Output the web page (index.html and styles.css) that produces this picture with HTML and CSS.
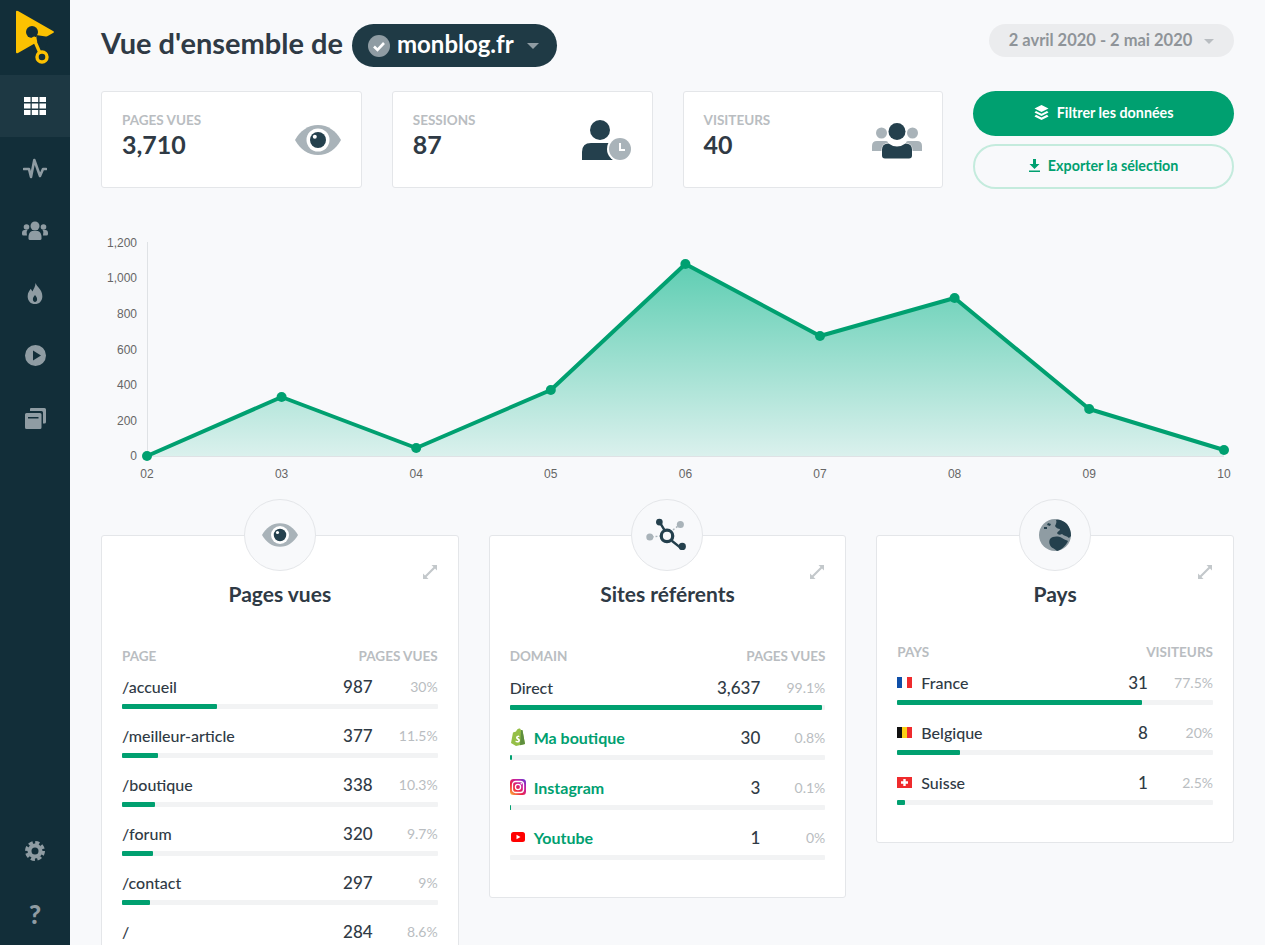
FILE: index.html
```html
<!DOCTYPE html>
<html lang="fr">
<head>
    <meta charset="UTF-8">
    <meta name="viewport" content="width=device-width, initial-scale=1.0">
    <title>Vue d'ensemble</title>
    <link rel="stylesheet" href="styles.css">
</head>
<body>
    <svg class="icon-defs" width="0" height="0">
        <symbol id="i-eye" viewBox="0 0 46 30">
            <path d="M0 15C5 6 13 0 23 0s18 6 23 15c-5 9-13 15-23 15S5 24 0 15z" fill="#a9b3b9"/>
            <circle cx="23" cy="15" r="11.5" fill="#fff"/>
            <circle cx="23" cy="15" r="8" fill="#24404d"/>
            <circle cx="19.8" cy="11.8" r="2" fill="#fff"/>
        </symbol>
        <symbol id="i-expand" viewBox="0 0 16 16">
            <path d="M9.5 1H15v5.5l-2-2L4.5 13l2 2H1V9.5l2 2L11.5 3z" fill="#c3c8cb"/>
        </symbol>
    </svg>

    <aside class="sidebar">
        <a class="logo" href="#">
            <svg width="70" height="75" viewBox="0 0 70 75">
                <path d="M18 11L53 31Q55 32 53 33L18 53Q16 54 16 52V12Q16 10 18 11z" fill="#fcc101"/>
                <path d="M36 35L49 37 44 52 39 52z" fill="#122e39"/>
                <circle cx="32" cy="32" r="6" fill="#122e39"/>
                <path d="M33 37L40 53" stroke="#fcc101" stroke-width="3.2"/>
                <circle cx="42" cy="57" r="5" fill="#122e39" stroke="#fcc101" stroke-width="3.4"/>
            </svg>
        </a>
        <nav class="side-nav">
            <a class="side-link active" href="#">
                <svg width="22" height="18" viewBox="0 0 22 18" fill="#fff">
                    <path d="M0 0h6.5v5H0zM7.8 0h6.4v5H7.8zM15.5 0H22v5h-6.5zM0 6.5h6.5v5H0zM7.8 6.5h6.4v5H7.8zM15.5 6.5H22v5h-6.5zM0 13h6.5v5H0zM7.8 13h6.4v5H7.8zM15.5 13H22v5h-6.5z"/>
                </svg>
            </a>
            <a class="side-link" href="#">
                <svg width="24" height="22" viewBox="0 0 24 22" fill="none" stroke="#8f9ca3" stroke-width="2.6" stroke-linejoin="round" stroke-linecap="round">
                    <path d="M1 11h5l2 8 3.3-17 5.7 16 3-7h3"/>
                </svg>
            </a>
            <a class="side-link" href="#">
                <svg width="26" height="19" viewBox="0 0 26 19" fill="#8f9ca3">
                    <circle cx="13" cy="5" r="4.5"/>
                    <path d="M6.5 16c0-4 2.5-6 4-6h5c1.5 0 4 2 4 6v1.5q0 1.5-1.5 1.5H8q-1.5 0-1.5-1.5z"/>
                    <circle cx="4.5" cy="6" r="2.8"/>
                    <circle cx="21.5" cy="6" r="2.8"/>
                    <path d="M0 12c0-2 1-3 2.5-3h3C4 10.5 5 13 5 14.5H1.5Q0 14.5 0 13zM26 12c0-2-1-3-2.5-3h-3c1.500 1.5 .5 4 .5 5.5h3.500q1.500 0 1.500-1.500z"/>
                </svg>
            </a>
            <a class="side-link" href="#">
                <svg width="16" height="21" viewBox="0 0 14 20" fill="#8f9ca3">
                    <path d="M7.5 0c1 3.5 6.5 6 6.500 12.500C14 17 11 20 7 20s-7-3-7-7.500C0 9 2 7 3 5.500l1.500 2.500C5.500 6 7.500 3.500 7.500 0zM7 11.500c-1 1.500-2 2.300-2 4S6 18 7 18s2-.8 2-2.500S8 13 7 11.500z" fill-rule="evenodd"/>
                </svg>
            </a>
            <a class="side-link" href="#">
                <svg width="21" height="21" viewBox="0 0 21 21" fill="#8f9ca3">
                    <path d="M10.5 0a10.5 10.5 0 1 0 0 21 10.5 10.5 0 0 0 0-21zM8 5.5l8 5-8 5z" fill-rule="evenodd"/>
                </svg>
            </a>
            <a class="side-link" href="#">
                <svg width="21" height="21" viewBox="0 0 21 21" fill="#8f9ca3">
                    <path d="M6 0h13.5q1.5 0 1.5 1.5V14q0 1.5-1.5 1.5H18V4.5Q18 3 16.5 3H5V1q0-1 1-1z"/>
                    <path d="M1.5 5h13.5q1.5 0 1.5 1.5v13q0 1.5-1.5 1.5H1.5Q0 21 0 19.5v-13Q0 5 1.5 5zM3 9v1.5h10.500V9z" fill-rule="evenodd"/>
                </svg>
            </a>
        </nav>
        <div class="side-bottom">
            <a class="side-link" href="#">
                <svg width="20" height="20" viewBox="0 0 20 20">
                    <circle cx="10" cy="10" r="5.5" fill="none" stroke="#8f9ca3" stroke-width="4"/>
                    <circle cx="10" cy="10" r="8.5" fill="none" stroke="#8f9ca3" stroke-width="3" stroke-dasharray="4.2 2.47"/>
                </svg>
            </a>
            <a class="side-link help" href="#">?</a>
        </div>
    </aside>

    <main class="main-content">
        <header class="header">
            <div class="title-row">
                <h1>Vue d'ensemble de</h1>
                <button class="site-pill">
                    <svg width="22" height="22" viewBox="0 0 22 22">
                        <circle cx="11" cy="11" r="11" fill="#8f9ca3"/>
                        <path d="M6 11.5l3.5 3.5L16 8" fill="none" stroke="#fff" stroke-width="2.6"/>
                    </svg>
                    <span class="site-name">monblog.fr</span>
                    <span class="caret"></span>
                </button>
            </div>
            <button class="date-pill">2 avril 2020 - 2 mai 2020 <span class="caret"></span></button>
        </header>

        <section class="stats">
            <div class="stat-card">
                <div>
                    <div class="stat-label">Pages vues</div>
                    <div class="stat-value">3,710</div>
                </div>
                <svg class="stat-eye"><use href="#i-eye"/></svg>
            </div>
            <div class="stat-card">
                <div>
                    <div class="stat-label">Sessions</div>
                    <div class="stat-value">87</div>
                </div>
                <svg class="stat-icon session-icon" width="50" height="40" viewBox="0 0 50 40">
                    <circle cx="18" cy="10" r="10" fill="#24404d"/>
                    <path d="M0 40v-8q0-9 9-9h18q9 0 9 9v8z" fill="#24404d"/>
                    <circle cx="38" cy="29" r="13" fill="#fff"/>
                    <circle cx="38" cy="29" r="11" fill="#a9b3b9"/>
                    <path d="M38 23v7h5" fill="none" stroke="#fff" stroke-width="2"/>
                </svg>
            </div>
            <div class="stat-card">
                <div>
                    <div class="stat-label">Visiteurs</div>
                    <div class="stat-value">40</div>
                </div>
                <svg class="stat-icon" width="50" height="36" viewBox="0 0 50 36">
                    <circle cx="9.5" cy="10" r="5.5" fill="#a9b3b9"/>
                    <circle cx="40.5" cy="10" r="5.5" fill="#a9b3b9"/>
                    <path d="M0 28v-5q0-5 5-5h9q2 0 2 2v8zM50 28v-5q0-5-5-5h-9q-2 0-2 2v8z" fill="#a9b3b9"/>
                    <circle cx="25" cy="8.5" r="8.5" fill="#24404d"/>
                    <path d="M9.5 33v-6q0-7 7-7 4 3 8.5 3t8.5-3q7 0 7 7v6q0 3-3 3h-25q-3 0-3-3z" fill="#fff"/>
                    <path d="M10 32.5v-6q0-6 6.500-6 4 3 8.500 3t8.500-3q6.500 0 6.500 6v6q0 3-3 3h-24q-3 0-3-3z" fill="#24404d"/>
                </svg>
            </div>
            <div class="actions">
                <button class="btn btn-primary">
                    <svg width="15" height="15" viewBox="0 0 15 15" fill="#fff">
                        <path d="M7.5 0l7 3.5-7 3.5-7-3.5z"/>
                        <path d="M2 6l5.5 2.8L13 6l1.5 1.5-7 3.5-7-3.5z"/>
                        <path d="M2 9.7l5.5 2.8L13 9.7l1.5 1.8-7 3.5-7-3.5z"/>
                    </svg>
                    Filtrer les données
                </button>
                <button class="btn btn-outline">
                    <svg width="11" height="13" viewBox="0 0 11 13" fill="#00a070">
                        <path d="M4 0h3v5h3.5L5.5 10 .5 5H4zM0 11.5h11V13H0z"/>
                    </svg>
                    Exporter la sélection
                </button>
            </div>
        </section>

        <section class="chart">
            <svg class="chart-svg" width="1133" height="250" viewBox="101 235 1133 250">
                <defs>
                    <linearGradient id="area-fill" x1="0" y1="264" x2="0" y2="456" gradientUnits="userSpaceOnUse">
                        <stop offset="0" stop-color="#00b386" stop-opacity=".62"/>
                        <stop offset="1" stop-color="#00b386" stop-opacity=".12"/>
                    </linearGradient>
                </defs>
                <path d="M147.5 242V456.5H1224" fill="none" stroke="#dfe2e5"/>
                <path d="M147 456L281.6 397 416.2 448 550.8 390 685.4 264 820 336 954.6 298 1089.2 409 1224 450V456z" fill="url(#area-fill)"/>
                <path d="M147 456L281.6 397 416.2 448 550.8 390 685.4 264 820 336 954.6 298 1089.2 409 1224 450" fill="none" stroke="#00a070" stroke-width="4" stroke-linejoin="round"/>
                <g fill="#00a070">
                    <circle cx="147" cy="456" r="5"/>
                    <circle cx="281.6" cy="397" r="5"/>
                    <circle cx="416.2" cy="448" r="5"/>
                    <circle cx="550.8" cy="390" r="5"/>
                    <circle cx="685.4" cy="264" r="5"/>
                    <circle cx="820" cy="336" r="5"/>
                    <circle cx="954.6" cy="298" r="5"/>
                    <circle cx="1089.2" cy="409" r="5"/>
                    <circle cx="1224" cy="450" r="5"/>
                </g>
                <g class="axis-y" text-anchor="end">
                    <text x="137" y="247">1,200</text>
                    <text x="137" y="282">1,000</text>
                    <text x="137" y="318">800</text>
                    <text x="137" y="354">600</text>
                    <text x="137" y="389">400</text>
                    <text x="137" y="425">200</text>
                    <text x="137" y="460">0</text>
                </g>
                <g class="axis-x" text-anchor="middle">
                    <text x="147" y="478">02</text>
                    <text x="281.6" y="478">03</text>
                    <text x="416.2" y="478">04</text>
                    <text x="550.8" y="478">05</text>
                    <text x="685.4" y="478">06</text>
                    <text x="820" y="478">07</text>
                    <text x="954.6" y="478">08</text>
                    <text x="1089.2" y="478">09</text>
                    <text x="1224" y="478">10</text>
                </g>
            </svg>
        </section>

        <section class="panels">
            <article class="panel">
                <div class="panel-badge"><svg class="badge-eye"><use href="#i-eye"/></svg></div>
                <svg class="expand"><use href="#i-expand"/></svg>
                <h2>Pages vues</h2>
                <div class="table-head"><span>Page</span><span>Pages vues</span></div>
                <div class="row">
                    <div class="row-line"><span class="row-name">/accueil</span><span class="row-num">987</span><span class="row-pct">30%</span></div>
                    <div class="bar"><div class="bar-fill" style="width: 30%"></div></div>
                </div>
                <div class="row">
                    <div class="row-line"><span class="row-name">/meilleur-article</span><span class="row-num">377</span><span class="row-pct">11.5%</span></div>
                    <div class="bar"><div class="bar-fill" style="width: 11.5%"></div></div>
                </div>
                <div class="row">
                    <div class="row-line"><span class="row-name">/boutique</span><span class="row-num">338</span><span class="row-pct">10.3%</span></div>
                    <div class="bar"><div class="bar-fill" style="width: 10.3%"></div></div>
                </div>
                <div class="row">
                    <div class="row-line"><span class="row-name">/forum</span><span class="row-num">320</span><span class="row-pct">9.7%</span></div>
                    <div class="bar"><div class="bar-fill" style="width: 9.7%"></div></div>
                </div>
                <div class="row">
                    <div class="row-line"><span class="row-name">/contact</span><span class="row-num">297</span><span class="row-pct">9%</span></div>
                    <div class="bar"><div class="bar-fill" style="width: 9%"></div></div>
                </div>
                <div class="row">
                    <div class="row-line"><span class="row-name">/</span><span class="row-num">284</span><span class="row-pct">8.6%</span></div>
                    <div class="bar"><div class="bar-fill" style="width: 8.6%"></div></div>
                </div>
            </article>

            <article class="panel panel-sites">
                <div class="panel-badge">
                    <svg width="42" height="34" viewBox="0 0 44 34">
                        <path d="M6 19l10-1M33 8l-9 7" stroke="#a9b3b9" stroke-width="1.5" stroke-dasharray="2 2"/>
                        <circle cx="4" cy="19" r="3.7" fill="#a9b3b9"/>
                        <circle cx="36" cy="6" r="3.7" fill="#a9b3b9"/>
                        <path d="M14 3l6 10M27 23l10 8" stroke="#24404d" stroke-width="2.5"/>
                        <circle cx="14" cy="3.5" r="3.5" fill="#24404d"/>
                        <circle cx="38" cy="29" r="3.8" fill="#24404d"/>
                        <circle cx="22" cy="18" r="6" fill="none" stroke="#24404d" stroke-width="3.4"/>
                    </svg>
                </div>
                <svg class="expand"><use href="#i-expand"/></svg>
                <h2>Sites référents</h2>
                <div class="table-head"><span>Domain</span><span>Pages vues</span></div>
                <div class="row">
                    <div class="row-line"><span class="row-name">Direct</span><span class="row-num">3,637</span><span class="row-pct">99.1%</span></div>
                    <div class="bar"><div class="bar-fill" style="width: 99.1%"></div></div>
                </div>
                <div class="row">
                    <div class="row-line">
                        <a class="row-name row-link" href="#">
                            <svg width="16" height="18" viewBox="0 0 16 18">
                                <path d="M1 15L3 4.5 6 3.5C7 1 8.5 0 10 .5l1 1.5 1.5.2L15 16 6 18z" fill="#95bf47"/>
                                <path d="M11 2l1.5.2L15 16l-5 1.2z" fill="#5e8e3e"/>
                                <path d="M8.8 7.5C7 7.5 6 8.5 6 9.7c0 1.8 2.3 1.7 2.3 2.8 0 .8-1.3.8-2.5.1l-.4 1.5c2.5 1 4.6.2 4.6-1.900 0-1.900-2.300-1.900-2.300-2.800 0-.6 1-.6 1.900-.3z" fill="#fff"/>
                            </svg>
                            Ma boutique
                        </a>
                        <span class="row-num">30</span><span class="row-pct">0.8%</span>
                    </div>
                    <div class="bar"><div class="bar-fill" style="width: 0.8%"></div></div>
                </div>
                <div class="row">
                    <div class="row-line">
                        <a class="row-name row-link" href="#">
                            <svg width="16" height="16" viewBox="0 0 16 16">
                                <defs>
                                    <linearGradient id="insta" x1="0" y1="1" x2="1" y2="0">
                                        <stop offset="0" stop-color="#fdc13a"/>
                                        <stop offset=".35" stop-color="#f0243e"/>
                                        <stop offset=".7" stop-color="#c31fa6"/>
                                        <stop offset="1" stop-color="#5a3bd6"/>
                                    </linearGradient>
                                </defs>
                                <rect width="16" height="16" rx="3.5" fill="url(#insta)"/>
                                <rect x="2.5" y="2.5" width="11" height="11" rx="3" fill="none" stroke="#fff" stroke-width="1.3"/>
                                <circle cx="8" cy="8" r="2.6" fill="none" stroke="#fff" stroke-width="1.3"/>
                                <circle cx="11.3" cy="4.7" r=".8" fill="#fff"/>
                            </svg>
                            Instagram
                        </a>
                        <span class="row-num">3</span><span class="row-pct">0.1%</span>
                    </div>
                    <div class="bar"><div class="bar-fill" style="width: 0.3%"></div></div>
                </div>
                <div class="row">
                    <div class="row-line">
                        <a class="row-name row-link" href="#">
                            <svg width="16" height="16" viewBox="0 0 16 16">
                                <rect x="1" y="3" width="14" height="10" rx="2.5" fill="#f00"/>
                                <path d="M6.5 5.8L10.5 8l-4 2.2z" fill="#fff"/>
                            </svg>
                            Youtube
                        </a>
                        <span class="row-num">1</span><span class="row-pct">0%</span>
                    </div>
                    <div class="bar"></div>
                </div>
            </article>

            <article class="panel panel-countries">
                <div class="panel-badge">
                    <svg width="32" height="32" viewBox="0 0 32 32">
                        <circle cx="16" cy="16" r="16" fill="#8f9ca3"/>
                        <path d="M17 1c3-1 8 1 11 4 3 4 4 8 4 12l-2 2c-2-2-5-2-7-4-2 1-4 1-5-1 1-2 3-2 3-4-2 0-4-1-5-3 1-2 2-4 1-6zM9 4l3 1-1 2-3-1zM5 8l3 0 0 2-3 0z" fill="#24404d"/>
                        <path d="M11 20c3-3 8-3 12-1 3 2 5 2 6 3-2 5-7 9-11 10-3-3-6-3-7-6-1-2-1-4 0-6z" fill="#24404d"/>
                    </svg>
                </div>
                <svg class="expand"><use href="#i-expand"/></svg>
                <h2>Pays</h2>
                <div class="table-head"><span>Pays</span><span>Visiteurs</span></div>
                <div class="row">
                    <div class="row-line">
                        <span class="row-name row-country">
                            <svg width="15" height="11" viewBox="0 0 15 11"><path fill="#0f4fa8" d="M0 0h5v11H0z"/><path fill="#fff" d="M5 0h5v11H5z"/><path fill="#ef2b2d" d="M10 0h5v11h-5z"/></svg>
                            France
                        </span>
                        <span class="row-num">31</span><span class="row-pct">77.5%</span>
                    </div>
                    <div class="bar"><div class="bar-fill" style="width: 77.5%"></div></div>
                </div>
                <div class="row">
                    <div class="row-line">
                        <span class="row-name row-country">
                            <svg width="15" height="11" viewBox="0 0 15 11"><path fill="#111" d="M0 0h5v11H0z"/><path fill="#fcd116" d="M5 0h5v11H5z"/><path fill="#ef2b2d" d="M10 0h5v11h-5z"/></svg>
                            Belgique
                        </span>
                        <span class="row-num">8</span><span class="row-pct">20%</span>
                    </div>
                    <div class="bar"><div class="bar-fill" style="width: 20%"></div></div>
                </div>
                <div class="row">
                    <div class="row-line">
                        <span class="row-name row-country">
                            <svg width="15" height="11" viewBox="0 0 15 11"><path fill="#ef2b2d" d="M0 0h15v11H0z"/><path fill="#fff" d="M6.3 2h2.400v2.300H11v2.400H8.700V9H6.300V6.700H4V4.300h2.300z"/></svg>
                            Suisse
                        </span>
                        <span class="row-num">1</span><span class="row-pct">2.5%</span>
                    </div>
                    <div class="bar"><div class="bar-fill" style="width: 2.5%"></div></div>
                </div>
            </article>
        </section>
    </main>
</body>
</html>
```

FILE: styles.css
```css
:root {
    --sidebar: #122e39;
    --pill: #1f3a45;
    --green: #00a070;
    --background: #f8f9fb;
    --border: #e4e6e9;
    --text-primary: #2f3a45;
    --text-muted: #b9bdc1;
    --track: #f2f3f4;
}

* {
    margin: 0;
    padding: 0;
    box-sizing: border-box;
}

html,
body {
    height: 100%;
    overflow: hidden;
}

body {
    font-family: 'Lato', 'Noto Sans', sans-serif;
    background: var(--background);
    color: var(--text-primary);
    display: flex;
}

button {
    font-family: inherit;
    border: none;
    cursor: pointer;
}

a {
    text-decoration: none;
}

.icon-defs {
    display: none;
}

/* sidebar */
.sidebar {
    flex: 0 0 70px;
    height: 945px;
    background: var(--sidebar);
    display: flex;
    flex-direction: column;
}

.logo {
    display: block;
    height: 75px;
}

.side-nav {
    display: flex;
    flex-direction: column;
}

.side-bottom {
    margin-top: auto;
    display: flex;
    flex-direction: column;
}

.side-link {
    height: 62.4px;
    display: flex;
    align-items: center;
    justify-content: center;
}

.side-link.active {
    background: #1d3843;
}

.help {
    color: #8f9ca3;
    font-size: 26px;
    font-weight: 900;
}

/* main */
.main-content {
    flex: 1;
    min-width: 0;
    padding: 24px 31px 0;
}

.header {
    display: flex;
    justify-content: space-between;
    align-items: flex-start;
    height: 67px;
}

.title-row {
    display: flex;
    align-items: center;
    gap: 9px;
    height: 43px;
}

.title-row h1 {
    font-size: 29px;
    font-weight: 700;
    padding-bottom: 6px;
}

.site-pill {
    height: 43px;
    width: 205px;
    border-radius: 22px;
    background: var(--pill);
    color: #fff;
    font-size: 24px;
    font-weight: 700;
    display: flex;
    align-items: center;
    padding-left: 16px;
    gap: 7px;
}

.site-name {
    padding-bottom: 4px;
}

.caret {
    display: inline-block;
    border-left: 6px solid transparent;
    border-right: 6px solid transparent;
    border-top: 6px solid #8f9ca3;
    margin-left: 6px;
}

.date-pill {
    height: 33px;
    width: 245px;
    border-radius: 17px;
    background: #ebecee;
    color: #8f9499;
    font-size: 16.5px;
    font-weight: 700;
    padding-bottom: 2px;
}

.date-pill .caret {
    border-left-width: 5px;
    border-right-width: 5px;
    border-top: 5px solid #b9bdc1;
    margin-left: 8px;
    vertical-align: 2px;
}

/* stats */
.stats {
    display: grid;
    grid-template-columns: repeat(4, 1fr);
    gap: 30px;
}

.stat-card {
    height: 97px;
    background: #fff;
    border: 1px solid var(--border);
    border-radius: 3px;
    padding: 20px 20px 0;
    display: flex;
    justify-content: space-between;
    align-items: flex-start;
}

.stat-label {
    color: var(--text-muted);
    font-size: 13.5px;
    font-weight: 700;
    text-transform: uppercase;
    line-height: 17px;
}

.stat-value {
    font-size: 25px;
    font-weight: 700;
    line-height: 30px;
}

.stat-eye {
    width: 46px;
    height: 30px;
    margin-top: 13px;
}

.stat-icon {
    margin-top: 11px;
}

.session-icon {
    margin-top: 8px;
    overflow: visible;
}

.actions {
    display: flex;
    flex-direction: column;
    gap: 8px;
}

.btn {
    height: 45px;
    border-radius: 23px;
    font-size: 14.3px;
    font-weight: 700;
    display: flex;
    align-items: center;
    justify-content: center;
    gap: 8px;
    padding-bottom: 2px;
}

.btn-primary {
    background: var(--green);
    color: #fff;
}

.btn-outline {
    background: transparent;
    border: 2px solid #c4ebdd;
    color: var(--green);
}

/* chart */
.chart {
    height: 346px;
    padding-top: 46px;
}

.chart-svg {
    display: block;
}

.chart-svg text {
    font-family: 'Liberation Sans', sans-serif;
    font-size: 12px;
    fill: #666;
}

/* panels */
.panels {
    display: grid;
    grid-template-columns: repeat(3, 1fr);
    gap: 30px;
    align-items: start;
}

.panel {
    position: relative;
    background: #fff;
    border: 1px solid var(--border);
    border-radius: 3px;
    padding: 45px 20px 37px;
}

.panel-badge {
    position: absolute;
    top: -37px;
    left: 50%;
    margin-left: -36px;
    width: 72px;
    height: 72px;
    border-radius: 50%;
    background: var(--background);
    border: 1px solid var(--border);
    display: flex;
    align-items: center;
    justify-content: center;
}

.badge-eye {
    width: 36px;
    height: 24px;
}

.expand {
    position: absolute;
    top: 28px;
    right: 20px;
    width: 16px;
    height: 16px;
}

.panel h2 {
    text-align: center;
    font-size: 21px;
    font-weight: 700;
    line-height: 26px;
    margin-bottom: 41px;
}

.table-head {
    display: flex;
    justify-content: space-between;
    color: var(--text-muted);
    font-size: 13.5px;
    font-weight: 700;
    text-transform: uppercase;
    line-height: 17px;
    margin-bottom: 9px;
}

.panel-sites .table-head {
    margin-bottom: 10px;
}

.row {
    height: 49px;
}

.panel-sites .row,
.panel-countries .row {
    height: 50px;
}

.panel-sites .row:last-child,
.panel-countries .row:last-child {
    height: 35px;
}

.panel-countries h2 {
    margin-bottom: 37px;
}

.row-line {
    display: flex;
    align-items: center;
    height: 24px;
    font-size: 16px;
}

.row-name {
    flex: 1;
    font-weight: 500;
}

.row-link {
    color: var(--green);
    font-weight: 700;
    display: flex;
    align-items: center;
    gap: 8px;
}

.row-country {
    display: flex;
    align-items: center;
    gap: 9px;
}

.row-num {
    font-weight: 500;
    font-size: 17px;
}

.row-pct {
    width: 65px;
    text-align: right;
    color: var(--text-muted);
    font-size: 14px;
}

.bar {
    margin-top: 6px;
    height: 5px;
    background: var(--track);
    border-radius: 1px;
}

.bar-fill {
    height: 100%;
    background: var(--green);
    border-radius: 1px;
}
```
